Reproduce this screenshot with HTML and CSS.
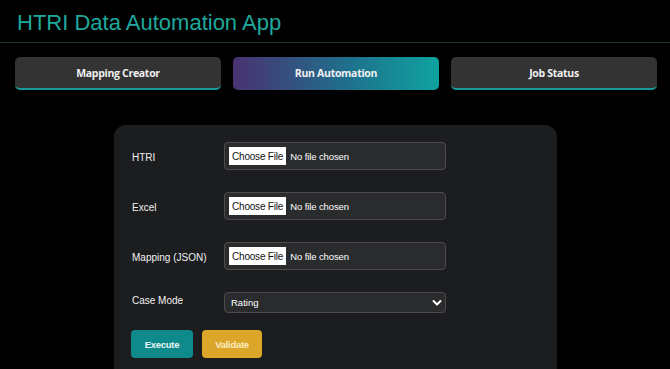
FILE: index.html
```html
<!DOCTYPE html>
<html>
<head>
<meta charset="utf-8">
<link rel="stylesheet" href="styles.css">
</head>
<body>
<header class="header">
  <h1 class="title">HTRI Data Automation App</h1>
</header>
<nav class="tabs">
  <button class="tab">Mapping Creator</button>
  <button class="tab active">Run Automation</button>
  <button class="tab">Job Status</button>
</nav>
<main class="card">
  <div class="row">
    <label class="label">HTRI</label>
    <input class="file" type="file">
  </div>
  <div class="row">
    <label class="label">Excel</label>
    <input class="file" type="file">
  </div>
  <div class="row">
    <label class="label">Mapping (JSON)</label>
    <input class="file" type="file">
  </div>
  <div class="row row-select">
    <label class="label">Case Mode</label>
    <div class="select-wrap">
      <select class="select"><option>Rating</option></select>
      <svg class="chev" width="10" height="8" viewBox="0 0 10 8"><path d="M1.5 2 L5 5.5 L8.5 2" fill="none" stroke="#fff" stroke-width="2" stroke-linecap="round" stroke-linejoin="round"/></svg>
    </div>
  </div>
  <div class="actions">
    <button class="btn btn-exec">Execute</button>
    <button class="btn btn-val">Validate</button>
  </div>
</main>
</body>
</html>
```
FILE: styles.css
```css
html, body {
  margin: 0;
  padding: 0;
  background: #000;
  height: 100%;
  overflow: hidden;
}
body {
  font-family: "Liberation Sans", Arial, sans-serif;
  color: #fff;
}
.header {
  border-bottom: 1px solid #173434;
  padding: 9px 17px 5px;
}
.title {
  margin: 0;
  font-family: "Liberation Sans", Arial, sans-serif;
  font-weight: 400;
  font-size: 22px;
  line-height: 28px;
  color: #1fa89c;
}
.tabs {
  display: flex;
  gap: 12px;
  padding: 14px 13px 0 15px;
}
.tab {
  flex: 1;
  height: 33px;
  border: none;
  border-bottom: 2px solid #1a9a98;
  border-radius: 5px;
  background: #333333;
  color: #f0f0f0;
  font-family: "Open Sans", "Noto Sans", sans-serif;
  font-weight: 700;
  font-size: 10.5px;
  letter-spacing: -0.3px;
}
.tab.active {
  background: linear-gradient(90deg, #4a3272 0%, #1f6f8c 55%, #0fa3a0 100%);
  border-bottom-color: transparent;
}
.card {
  margin: 35px 0 0 114px;
  width: 443px;
  height: 260px;
  box-sizing: border-box;
  background: #1c1d1f;
  border-radius: 12px;
  padding: 17px 18px;
}
.row {
  display: flex;
  align-items: center;
  height: 28px;
  margin-bottom: 22px;
}
.row-select {
  height: 21px;
  margin-bottom: 17px;
}
.label {
  width: 92px;
  font-size: 10px;
  color: #f2f2f2;
  padding-top: 3px;
}
.row-select .label {
  padding-top: 0;
  margin-top: -4px;
}
.file {
  width: 222px;
  height: 28px;
  box-sizing: border-box;
  background: #2a2b2d;
  border: 1px solid #4c4c4e;
  border-radius: 4px;
  padding: 4px 4px;
  color: #fff;
  font-family: "Liberation Sans", Arial, sans-serif;
  font-size: 9.5px;
  letter-spacing: -0.1px;
}
.file::file-selector-button {
  background: #fff;
  border: none;
  border-radius: 0;
  color: #111;
  font-family: "Liberation Sans", Arial, sans-serif;
  font-size: 10px;
  letter-spacing: -0.2px;
  height: 18px;
  padding: 0 3px;
  margin-right: 4px;
}
.select-wrap {
  position: relative;
  width: 222px;
  height: 21px;
}
.select {
  appearance: none;
  -webkit-appearance: none;
  width: 100%;
  height: 100%;
  box-sizing: border-box;
  background: #2a2b2d;
  border: 1px solid #4c4c4e;
  border-radius: 4px;
  color: #fff;
  font-family: "Liberation Sans", Arial, sans-serif;
  font-size: 9.5px;
  padding: 0 6px;
}
.chev {
  position: absolute;
  right: 4px;
  top: 7px;
}
.actions {
  display: flex;
  gap: 9px;
  margin-left: -1px;
}
.btn {
  height: 28px;
  border: none;
  border-radius: 4px;
  font-family: "Liberation Sans", Arial, sans-serif;
  font-weight: 700;
  font-size: 9.5px;
  letter-spacing: -0.3px;
}
.btn-exec {
  width: 62px;
  background: #0e8a8a;
  color: #e8f6f6;
}
.btn-val {
  width: 60px;
  background: #dca62b;
  color: #fbecc0;
}
```
